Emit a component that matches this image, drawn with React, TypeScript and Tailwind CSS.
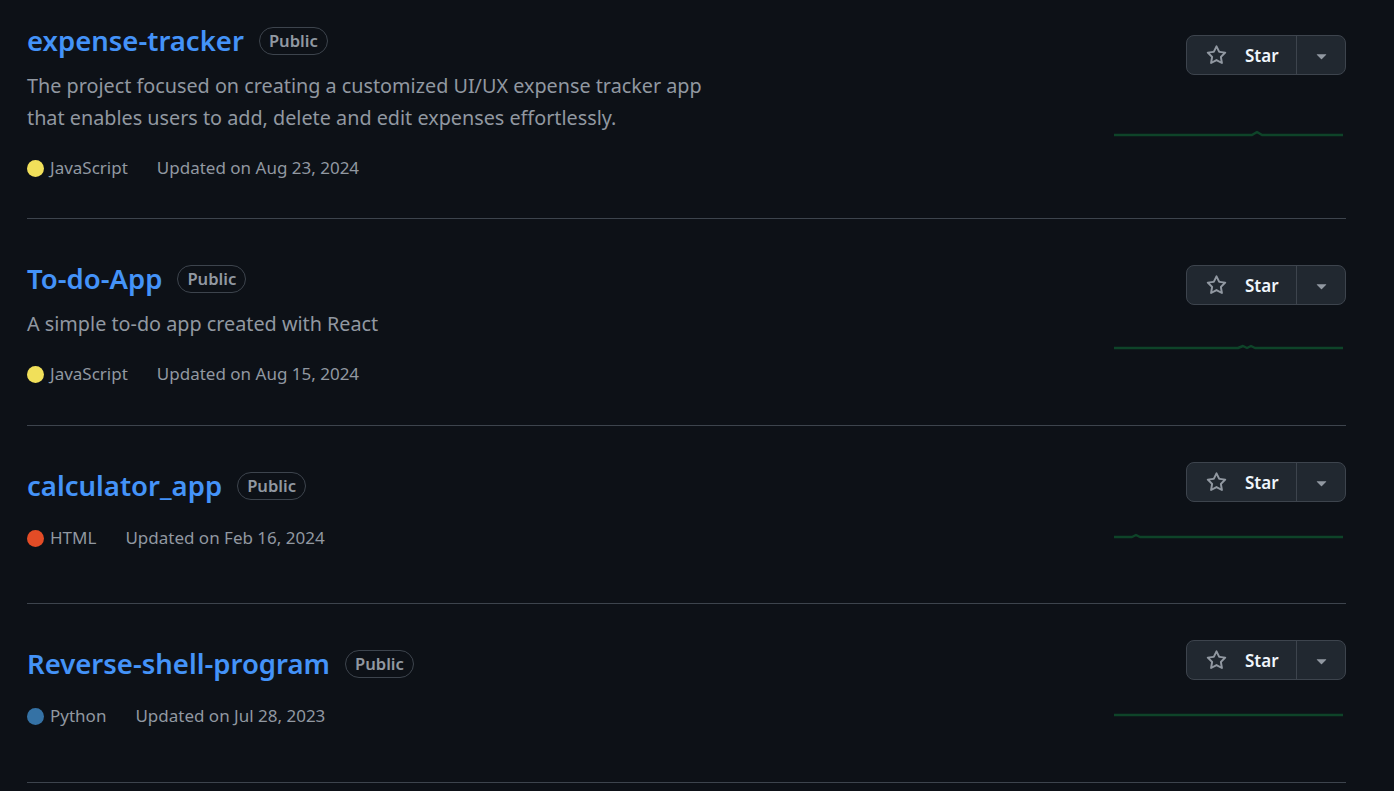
import React from "react";

interface Repo {
  name: string;
  description?: string[];
  lang: string;
  langColor: string;
  updated: string;
  btnPad: string;
  sparkGap: string;
  minH: string;
  bump: string;
}

const repos: Repo[] = [
  {
    name: "expense-tracker",
    description: [
      "The project focused on creating a customized UI/UX expense tracker app",
      "that enables users to add, delete and edit expenses effortlessly.",
    ],
    lang: "JavaScript",
    langColor: "bg-[#f1e05a]",
    updated: "Updated on Aug 23, 2024",
    btnPad: "pt-[54px]",
    sparkGap: "mt-[34px]",
    minH: "min-h-0",
    bump: "M0 26 L138 26 L143 23 L148 26 L229 26",
  },
  {
    name: "To-do-App",
    description: ["A simple to-do app created with React"],
    lang: "JavaScript",
    langColor: "bg-[#f1e05a]",
    updated: "Updated on Aug 15, 2024",
    btnPad: "pt-[46px]",
    sparkGap: "mt-[17px]",
    minH: "min-h-[207px]",
    bump: "M0 26 L124 26 L129 24 L133 26 L137 24 L141 26 L229 26",
  },
  {
    name: "calculator_app",
    lang: "HTML",
    langColor: "bg-[#e34c26]",
    updated: "Updated on Feb 16, 2024",
    btnPad: "pt-[36px]",
    sparkGap: "mt-[9px]",
    minH: "min-h-[178px]",
    bump: "M0 26 L18 26 L22 24 L26 26 L229 26",
  },
  {
    name: "Reverse-shell-program",
    lang: "Python",
    langColor: "bg-[#3572a5]",
    updated: "Updated on Jul 28, 2023",
    btnPad: "pt-[36px]",
    sparkGap: "mt-[9px]",
    minH: "min-h-[179px]",
    bump: "M0 26 L229 26",
  },
];

const StarIcon = () => (
  <svg width="21" height="21" viewBox="0 0 16 16" fill="#9198a1">
    <path d="M8 .25a.75.75 0 0 1 .673.418l1.882 3.815 4.21.612a.75.75 0 0 1 .416 1.279l-3.046 2.97.719 4.192a.751.751 0 0 1-1.088.791L8 12.347l-3.766 1.98a.75.75 0 0 1-1.088-.79l.72-4.194L.818 6.374a.75.75 0 0 1 .416-1.28l4.21-.611L7.327.668A.75.75 0 0 1 8 .25Zm0 2.445L6.615 5.5a.75.75 0 0 1-.564.41l-3.097.45 2.24 2.184a.75.75 0 0 1 .216.664l-.528 3.084 2.769-1.456a.75.75 0 0 1 .698 0l2.77 1.456-.53-3.084a.75.75 0 0 1 .216-.664l2.24-2.183-3.096-.45a.75.75 0 0 1-.564-.41L8 2.694Z" />
  </svg>
);

const CaretIcon = () => (
  <svg width="21" height="21" viewBox="0 0 16 16" fill="#9198a1">
    <path d="m4.427 7.427 3.396 3.396a.25.25 0 0 0 .354 0l3.396-3.396A.25.25 0 0 0 11.396 7H4.604a.25.25 0 0 0-.177.427Z" />
  </svg>
);

const StarButton = () => (
  <div className="flex h-[40px] w-[160px] rounded-[8px] border border-[#3d444d] bg-[#212830]">
    <button className="flex w-[110px] items-center gap-[18px] border-r border-[#3d444d] pl-[19px] pt-[1px] text-[17px] font-semibold text-[#f0f6fc]">
      <StarIcon />
      <span>Star</span>
    </button>
    <button className="flex flex-1 items-center justify-center">
      <CaretIcon />
    </button>
  </div>
);

const Sparkline = ({ d, gap }: { d: string; gap: string }) => (
  <svg width="232" height="30" className={`${gap} block`}>
    <path d={d} fill="none" stroke="#0e4429" strokeWidth="2.5" strokeLinejoin="round" />
  </svg>
);

const RepoRow = ({ repo }: { repo: Repo }) => (
  <li className={`flex justify-between border-b border-[#3d444d] ${repo.minH}`}>
    <div className="flex flex-col pt-[40px] pb-[38px]">
      <div className="flex h-[40px] items-center">
        <a className="text-[27.5px] font-semibold leading-[40px] text-[#4493f8]">{repo.name}</a>
        <span className="ml-[15px] flex h-[28px] items-center rounded-full border border-[#3d444d] px-[9px] text-[16.6px] font-semibold text-[#9198a1]">
          Public
        </span>
      </div>
      {repo.description && (
        <div className="mt-[9px] mb-[2px] text-[19.8px] leading-[32px] text-[#9198a1]">
          {repo.description.map((line) => (
            <div key={line}>{line}</div>
          ))}
        </div>
      )}
      <div className="mt-[20px] flex h-[24px] items-center text-[17px] text-[#9198a1]">
        <span className={`h-[17px] w-[17px] rounded-full ${repo.langColor}`} />
        <span className="ml-[6px]">{repo.lang}</span>
        <span className="ml-[29px]">{repo.updated}</span>
      </div>
    </div>
    <div className={`flex flex-col items-end ${repo.btnPad}`}>
      <StarButton />
      <Sparkline d={repo.bump} gap={repo.sparkGap} />
    </div>
  </li>
);

export default function App() {
  return (
    <div
      className="h-[791px] w-full overflow-hidden bg-[#0d1117]"
      style={{ fontFamily: '"Noto Sans", "Open Sans", sans-serif' }}
    >
      <ul className="-mt-[19px] pl-[27px] pr-[48px]">
        {repos.map((repo) => (
          <RepoRow key={repo.name} repo={repo} />
        ))}
      </ul>
    </div>
  );
}
